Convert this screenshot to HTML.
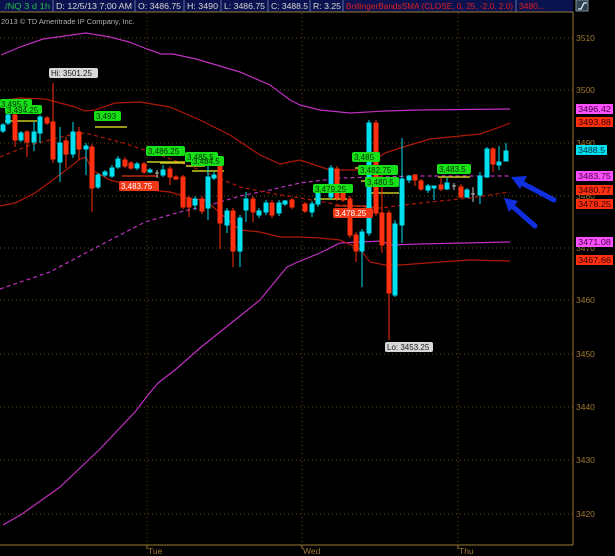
<!DOCTYPE html>
<html><head><meta charset="utf-8"><style>
html,body{margin:0;padding:0;background:#000;width:615px;height:556px;overflow:hidden}
svg{display:block}
text{font-family:"Liberation Sans",sans-serif}
</style></head><body>
<svg width="615" height="556" viewBox="0 0 615 556" xmlns="http://www.w3.org/2000/svg">
<rect width="615" height="556" fill="#000"/>
<rect x="0" y="0" width="573" height="12" fill="#0b1250"/>
<line x1="0" y1="12" x2="573" y2="12" stroke="#9a7a30" stroke-width="1"/>
<g stroke="#6070a0" stroke-width="1">
<line x1="53" y1="0" x2="53" y2="12"/><line x1="135" y1="0" x2="135" y2="12"/><line x1="184" y1="0" x2="184" y2="12"/><line x1="221" y1="0" x2="221" y2="12"/><line x1="268" y1="0" x2="268" y2="12"/><line x1="310" y1="0" x2="310" y2="12"/><line x1="343" y1="0" x2="343" y2="12"/><line x1="516" y1="0" x2="516" y2="12"/>
</g>
<g font-size="8" fill="#d8d8d8">
<text x="5" y="9" fill="#20c040" textLength="45" lengthAdjust="spacingAndGlyphs">/NQ 3 d 1h</text>
<text x="56" y="9" textLength="76" lengthAdjust="spacingAndGlyphs">D: 12/5/13 7:00 AM</text>
<text x="138" y="9" textLength="43" lengthAdjust="spacingAndGlyphs">O: 3486.75</text>
<text x="187" y="9" textLength="31" lengthAdjust="spacingAndGlyphs">H: 3490</text>
<text x="224" y="9" textLength="41" lengthAdjust="spacingAndGlyphs">L: 3486.75</text>
<text x="271" y="9" textLength="37" lengthAdjust="spacingAndGlyphs">C: 3488.5</text>
<text x="313" y="9" textLength="28" lengthAdjust="spacingAndGlyphs">R: 3.25</text>
<text x="346" y="9" fill="#e02020" textLength="167" lengthAdjust="spacingAndGlyphs">BollingerBandsSMA (CLOSE, 0, 25, -2.0, 2.0)</text>
<text x="519" y="9" fill="#e02020" textLength="26" lengthAdjust="spacingAndGlyphs">3480...</text>
</g>
<rect x="576" y="0" width="12" height="11" fill="#304050" stroke="#8090a0" stroke-width="1"/>
<path d="M578 9 L581 9 L584 3 L587 3" stroke="#e0f0ff" stroke-width="1.3" fill="none"/>
<text x="1" y="24" font-size="7.5" fill="#b0b0b0">2013 © TD Ameritrade IP Company, Inc.</text>
<g stroke="#6a4a10" stroke-width="1" stroke-dasharray="1,3">
<line x1="0" y1="38" x2="573" y2="38"/><line x1="0" y1="90" x2="573" y2="90"/><line x1="0" y1="143" x2="573" y2="143"/><line x1="0" y1="196" x2="573" y2="196"/><line x1="0" y1="248" x2="573" y2="248"/><line x1="0" y1="300" x2="573" y2="300"/><line x1="0" y1="354" x2="573" y2="354"/><line x1="0" y1="407" x2="573" y2="407"/><line x1="0" y1="460" x2="573" y2="460"/><line x1="0" y1="514" x2="573" y2="514"/>
<line x1="147" y1="13" x2="147" y2="545"/><line x1="302" y1="13" x2="302" y2="545"/><line x1="458" y1="13" x2="458" y2="545"/>
</g>
<line x1="573" y1="12" x2="573" y2="545" stroke="#9a7a30"/>
<line x1="0" y1="545" x2="573" y2="545" stroke="#9a7a30"/>
<g stroke="#9a7a30"><line x1="147" y1="545" x2="147" y2="549"/><line x1="302" y1="545" x2="302" y2="549"/><line x1="458" y1="545" x2="458" y2="549"/></g>
<g font-size="8.5" fill="#a07a30">
<text x="148" y="554">Tue</text><text x="303" y="554">Wed</text><text x="459" y="554">Thu</text>
<text x="576" y="41">3510</text><text x="576" y="93">3500</text><text x="576" y="146">3490</text><text x="576" y="199">3480</text><text x="576" y="251">3470</text><text x="576" y="303">3460</text><text x="576" y="357">3450</text><text x="576" y="410">3440</text><text x="576" y="463">3430</text><text x="576" y="517">3420</text>
</g>
<g fill="none" stroke-width="1.2">
<polyline stroke="#c030c0" points="1,55 20,47 43,39 86,33 110,37 129,42 147,49 161,54 173,54 196,59 240,72 270,85 290,100 300,105 320,110 350,113 385,111 420,110 510,109"/>
<polyline stroke="#c030c0" points="3,525 22,514 60,487 100,449 135,412 148,395 158,383 175,370 200,348 240,316 260,300 287,267 300,261 320,253 340,243 360,242 382,241 390,245 420,244 510,242"/>
<polyline stroke="#c030c0" stroke-dasharray="4,3" points="0,289 50,272 95,248 145,222 180,212 210,205 240,196 270,190 300,183 340,178 380,177 420,176 470,176 510,176"/>
<polyline stroke="#b01808" points="0,101 20,98 45,99 60,103 75,107 85,111 95,110 115,103 140,102 170,107 200,120 230,135 260,155 280,164 300,160 330,170 360,170 385,153 400,148 430,139 480,134 500,127 510,123"/>
<polyline stroke="#b01808" points="0,206 15,203 35,193 50,182 70,167 80,159 86,157 92,170 110,180 130,185 150,190 170,192 180,195 190,199 205,200 220,213 240,230 260,232 280,237 300,237 320,238 340,240 360,249 370,262 385,265 400,265 440,262 470,260 510,261"/>
<polyline stroke="#b01808" stroke-dasharray="4,3" points="0,157 30,145 70,135 85,133 120,142 160,155 200,170 240,187 270,193 300,198 340,205 380,208 420,203 470,198 510,192"/>
</g>
<g stroke="#c8c820" stroke-width="1.5">
<line x1="5" y1="121" x2="37" y2="121"/><line x1="95" y1="127" x2="127" y2="127"/><line x1="147" y1="162" x2="185" y2="162"/><line x1="160" y1="163" x2="185" y2="163"/><line x1="186" y1="166" x2="205" y2="166"/><line x1="192" y1="171" x2="224" y2="171"/><line x1="314" y1="199" x2="347" y2="199"/><line x1="355" y1="168" x2="360" y2="168"/><line x1="361" y1="181" x2="367" y2="181"/><line x1="367" y1="193" x2="399" y2="193"/><line x1="438" y1="177" x2="470" y2="177"/>
</g>
<g stroke="#e03010" stroke-width="1.2"><line x1="122" y1="176" x2="158" y2="176"/><line x1="335" y1="206" x2="372" y2="206"/></g>
<g stroke-width="1">
<g stroke="#00e0f0" fill="#00e0f0">
<line x1="3" y1="123" x2="3" y2="133"/><rect x="1" y="125" width="4" height="6"/>
<line x1="8" y1="112" x2="8" y2="125"/><rect x="6" y="115" width="4" height="8"/>
<line x1="21" y1="131" x2="21" y2="142"/><rect x="19" y="133" width="4" height="7"/>
<line x1="34" y1="122" x2="34" y2="151"/><rect x="32" y="132" width="4" height="10"/>
<line x1="40" y1="115" x2="40" y2="143"/><rect x="38" y="117" width="4" height="16"/>
<line x1="60" y1="127" x2="60" y2="182"/><rect x="58" y="143" width="4" height="19"/>
<line x1="73" y1="122" x2="73" y2="158"/><rect x="71" y="132" width="4" height="22"/>
<line x1="86" y1="143" x2="86" y2="175"/><rect x="84" y="146" width="4" height="3"/>
<line x1="98" y1="173" x2="98" y2="189"/><rect x="96" y="175" width="4" height="12"/>
<line x1="105" y1="170" x2="105" y2="177"/><rect x="103" y="172" width="4" height="3"/>
<line x1="112" y1="165" x2="112" y2="178"/><rect x="110" y="168" width="4" height="8"/>
<line x1="118" y1="156" x2="118" y2="169"/><rect x="116" y="159" width="4" height="8"/>
<line x1="137" y1="162" x2="137" y2="170"/><rect x="135" y="164" width="4" height="4"/>
<line x1="150" y1="168" x2="150" y2="173"/><rect x="148" y="170" width="4" height="2"/>
<line x1="163" y1="165" x2="163" y2="177"/><rect x="161" y="170" width="4" height="5"/>
<line x1="195" y1="196" x2="195" y2="210"/><rect x="193" y="199" width="4" height="6"/>
<line x1="208" y1="160" x2="208" y2="220"/><rect x="206" y="177" width="4" height="31"/>
<line x1="214" y1="172" x2="214" y2="180"/><rect x="212" y="175" width="4" height="3"/>
<line x1="227" y1="208" x2="227" y2="233"/><rect x="225" y="211" width="4" height="14"/>
<line x1="240" y1="215" x2="240" y2="267"/><rect x="238" y="218" width="4" height="33"/>
<line x1="246" y1="192" x2="246" y2="222"/><rect x="244" y="199" width="4" height="11"/>
<line x1="259" y1="208" x2="259" y2="218"/><rect x="257" y="211" width="4" height="4"/>
<line x1="266" y1="200" x2="266" y2="215"/><rect x="264" y="203" width="4" height="9"/>
<line x1="279" y1="200" x2="279" y2="216"/><rect x="277" y="203" width="4" height="10"/>
<line x1="285" y1="200" x2="285" y2="206"/><rect x="283" y="201" width="4" height="3"/>
<line x1="312" y1="201" x2="312" y2="217"/><rect x="310" y="204" width="4" height="8"/>
<line x1="318" y1="190" x2="318" y2="207"/><rect x="316" y="193" width="4" height="11"/>
<line x1="331" y1="165" x2="331" y2="200"/><rect x="329" y="168" width="4" height="29"/>
<line x1="362" y1="229" x2="362" y2="287"/><rect x="360" y="232" width="4" height="19"/>
<line x1="369" y1="120" x2="369" y2="236"/><rect x="367" y="123" width="4" height="110"/>
<line x1="395" y1="220" x2="395" y2="297"/><rect x="393" y="224" width="4" height="71"/>
<line x1="402" y1="138" x2="402" y2="243"/><rect x="400" y="179" width="4" height="46"/>
<line x1="409" y1="175" x2="409" y2="183"/><rect x="407" y="176" width="4" height="4"/>
<line x1="428" y1="184" x2="428" y2="193"/><rect x="426" y="186" width="4" height="4"/>
<line x1="434" y1="186" x2="434" y2="200"/><rect x="432" y="186" width="4" height="2"/>
<line x1="447" y1="178" x2="447" y2="190"/><rect x="445" y="183" width="4" height="6"/>
<line x1="467" y1="188" x2="467" y2="198"/><rect x="465" y="190" width="4" height="7"/>
<line x1="480" y1="172" x2="480" y2="204"/><rect x="478" y="176" width="4" height="19"/>
<line x1="487" y1="147" x2="487" y2="178"/><rect x="485" y="149" width="4" height="28"/>
<line x1="499" y1="146" x2="499" y2="170"/><rect x="497" y="162" width="4" height="3"/>
<line x1="506" y1="143" x2="506" y2="161"/><rect x="504" y="151" width="4" height="10"/>
</g>
<g stroke="#ff3010" fill="#ff3010">
<line x1="15" y1="113" x2="15" y2="147"/><rect x="13" y="115" width="4" height="25"/>
<line x1="27" y1="130" x2="27" y2="157"/><rect x="25" y="132" width="4" height="10"/>
<line x1="47" y1="116" x2="47" y2="125"/><rect x="45" y="118" width="4" height="5"/>
<line x1="53" y1="83" x2="53" y2="163"/><rect x="51" y="122" width="4" height="37"/>
<line x1="66" y1="137" x2="66" y2="168"/><rect x="64" y="141" width="4" height="13"/>
<line x1="79" y1="127" x2="79" y2="160"/><rect x="77" y="132" width="4" height="17"/>
<line x1="92" y1="144" x2="92" y2="212"/><rect x="90" y="147" width="4" height="41"/>
<line x1="125" y1="157" x2="125" y2="168"/><rect x="123" y="160" width="4" height="6"/>
<line x1="131" y1="161" x2="131" y2="170"/><rect x="129" y="163" width="4" height="5"/>
<line x1="144" y1="162" x2="144" y2="174"/><rect x="142" y="164" width="4" height="8"/>
<line x1="170" y1="166" x2="170" y2="185"/><rect x="168" y="169" width="4" height="8"/>
<line x1="176" y1="175" x2="176" y2="180"/><rect x="174" y="177" width="4" height="2"/>
<line x1="183" y1="175" x2="183" y2="209"/><rect x="181" y="177" width="4" height="30"/>
<line x1="189" y1="196" x2="189" y2="217"/><rect x="187" y="198" width="4" height="9"/>
<line x1="202" y1="196" x2="202" y2="214"/><rect x="200" y="199" width="4" height="12"/>
<line x1="220" y1="160" x2="220" y2="249"/><rect x="218" y="166" width="4" height="57"/>
<line x1="233" y1="208" x2="233" y2="267"/><rect x="231" y="211" width="4" height="40"/>
<line x1="253" y1="196" x2="253" y2="222"/><rect x="251" y="199" width="4" height="13"/>
<line x1="272" y1="200" x2="272" y2="218"/><rect x="270" y="203" width="4" height="12"/>
<line x1="292" y1="198" x2="292" y2="209"/><rect x="290" y="200" width="4" height="7"/>
<line x1="305" y1="202" x2="305" y2="213"/><rect x="303" y="204" width="4" height="7"/>
<line x1="337" y1="166" x2="337" y2="201"/><rect x="335" y="169" width="4" height="29"/>
<line x1="343" y1="187" x2="343" y2="202"/><rect x="341" y="190" width="4" height="10"/>
<line x1="350" y1="196" x2="350" y2="238"/><rect x="348" y="199" width="4" height="36"/>
<line x1="356" y1="232" x2="356" y2="262"/><rect x="354" y="235" width="4" height="16"/>
<line x1="376" y1="120" x2="376" y2="216"/><rect x="374" y="123" width="4" height="90"/>
<line x1="382" y1="167" x2="382" y2="253"/><rect x="380" y="213" width="4" height="32"/>
<line x1="389" y1="210" x2="389" y2="340"/><rect x="387" y="213" width="4" height="80"/>
<line x1="415" y1="174" x2="415" y2="186"/><rect x="413" y="175" width="4" height="5"/>
<line x1="421" y1="179" x2="421" y2="191"/><rect x="419" y="181" width="4" height="8"/>
<line x1="441" y1="178" x2="441" y2="191"/><rect x="439" y="185" width="4" height="4"/>
<line x1="461" y1="184" x2="461" y2="198"/><rect x="459" y="187" width="4" height="10"/>
<line x1="493" y1="147" x2="493" y2="172"/><rect x="491" y="149" width="4" height="15"/>
</g>
<g stroke="#c0c0c0"><line x1="157" y1="170" x2="157" y2="178"/><line x1="155" y1="173" x2="159" y2="173"/><line x1="454" y1="183" x2="454" y2="190"/><line x1="452" y1="186" x2="456" y2="186"/><line x1="473" y1="187" x2="473" y2="202"/><line x1="471" y1="194" x2="475" y2="194"/></g>
</g>
<g font-size="8">
<g fill="#18e018"><rect x="0" y="99" width="32" height="9" rx="2"/><rect x="5" y="105" width="37" height="9" rx="2"/><rect x="94" y="111" width="27" height="10" rx="2"/><rect x="146" y="146" width="39" height="10" rx="2"/><rect x="185" y="152" width="33" height="10" rx="2"/><rect x="191" y="156" width="33" height="10" rx="2"/><rect x="313" y="184" width="40" height="9" rx="2"/><rect x="352" y="152" width="28" height="10" rx="2"/><rect x="358" y="165" width="40" height="10" rx="2"/><rect x="365" y="177" width="34" height="10" rx="2"/><rect x="437" y="164" width="34" height="10" rx="2"/></g>
<g fill="#003000"><text x="1" y="107">3,495.5</text><text x="7" y="113">3,494.25</text><text x="96" y="119">3,493</text><text x="148" y="154">3,486.25</text><text x="187" y="160">3,485.5</text><text x="193" y="164">3,484.5</text><text x="315" y="192">3,479.25</text><text x="354" y="160">3,485</text><text x="360" y="173">3,482.75</text><text x="367" y="185">3,480.5</text><text x="439" y="172">3,483.5</text></g>
<rect x="119" y="181" width="40" height="10" rx="2" fill="#f03818"/><text x="121" y="189" fill="#fff">3,483.75</text>
<rect x="333" y="208" width="40" height="10" rx="2" fill="#f03818"/><text x="335" y="216" fill="#fff">3,478.25</text>
<rect x="49" y="68" width="49" height="10" rx="2" fill="#d8d8d8"/><text x="51" y="76" fill="#202020">Hi: 3501.25</text>
<rect x="385" y="342" width="48" height="10" rx="2" fill="#d8d8d8"/><text x="387" y="350" fill="#202020">Lo: 3453.25</text>
</g>
<g font-size="8">
<rect x="576" y="104" width="37" height="10" fill="#ff50ff"/><text x="578" y="112" fill="#400040" textLength="33" lengthAdjust="spacingAndGlyphs">3496.42</text>
<rect x="576" y="117" width="37" height="10" fill="#ff3010"/><text x="578" y="125" fill="#300" textLength="33" lengthAdjust="spacingAndGlyphs">3493.88</text>
<rect x="576" y="145" width="31" height="10" fill="#00e0f0"/><text x="578" y="153" fill="#003040" textLength="27" lengthAdjust="spacingAndGlyphs">3488.5</text>
<rect x="576" y="171" width="37" height="10" fill="#ff50ff"/><text x="578" y="179" fill="#400040" textLength="33" lengthAdjust="spacingAndGlyphs">3483.75</text>
<rect x="576" y="185" width="37" height="10" fill="#ff3010"/><text x="578" y="193" fill="#300" textLength="33" lengthAdjust="spacingAndGlyphs">3480.77</text>
<rect x="576" y="199" width="37" height="10" fill="#ff3010"/><text x="578" y="207" fill="#300" textLength="33" lengthAdjust="spacingAndGlyphs">3478.25</text>
<rect x="576" y="237" width="37" height="10" fill="#ff50ff"/><text x="578" y="245" fill="#400040" textLength="33" lengthAdjust="spacingAndGlyphs">3471.08</text>
<rect x="576" y="255" width="37" height="10" fill="#ff3010"/><text x="578" y="263" fill="#300" textLength="33" lengthAdjust="spacingAndGlyphs">3467.66</text>
</g>
<g stroke="#1030e0" stroke-width="5" stroke-linecap="round">
<line x1="554" y1="200" x2="520" y2="182"/><line x1="535" y1="226" x2="510" y2="204"/>
</g>
<g fill="#1030e0"><polygon points="511,177 527,176 520,189"/><polygon points="504,198 518,201 509,212"/></g>
</svg>
</body></html>
